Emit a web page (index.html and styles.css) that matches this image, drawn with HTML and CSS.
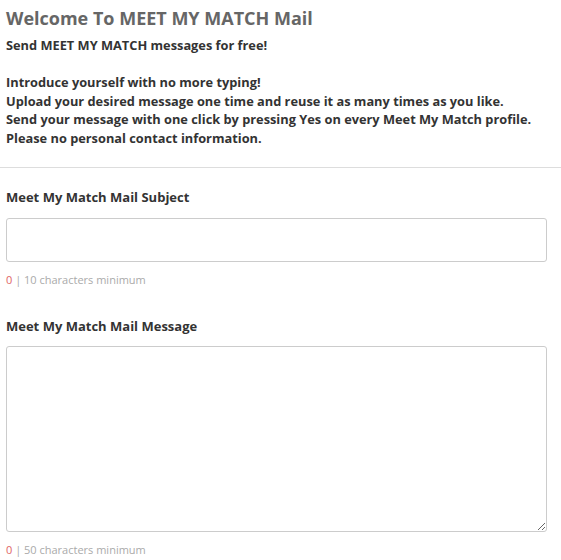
FILE: index.html
```html
<!DOCTYPE html>
<html lang="en">
<head>
    <meta charset="UTF-8">
    <meta name="viewport" content="width=device-width, initial-scale=1.0">
    <title>Meet My Match Mail</title>
    <link rel="stylesheet" href="styles.css">
</head>
<body>

<div class="intro">
    <h1>Welcome To MEET MY MATCH Mail</h1>
    <p>Send MEET MY MATCH messages for free!</p>
    <p>Introduce yourself with no more typing!<br>
    Upload your desired message one time and reuse it as many times as you like.<br>
    Send your message with one click by pressing Yes on every Meet My Match profile.<br>
    Please no personal contact information.</p>
</div>

<hr class="divider">

<form class="mail-form">
    <div class="field">
        <label for="subject">Meet My Match Mail Subject</label>
        <input type="text" id="subject">
        <div class="counter"><span class="count">0</span> | 10 characters minimum</div>
    </div>

    <div class="field">
        <label for="message">Meet My Match Mail Message</label>
        <textarea id="message"></textarea>
        <div class="counter"><span class="count">0</span> | 50 characters minimum</div>
    </div>
</form>

</body>
</html>
```

FILE: styles.css
```css
body {
    margin: 0;
    font-family: "Open Sans", Arial, sans-serif;
    color: #333;
    background-color: #fff;
}
.intro {
    padding: 7px 14px 0 6px;
}
.intro h1 {
    margin: 0 0 7px 0;
    font-size: 18px;
    line-height: 22px;
    font-weight: bold;
    color: #666;
}
.intro p {
    margin: 0 0 18.5px 0;
    font-size: 12.8px;
    line-height: 18.5px;
    font-weight: bold;
}
.intro p:last-child {
    margin-bottom: 0;
}
.divider {
    border: none;
    border-top: 1px solid #ddd;
    margin: 20px 0 0 0;
}
.mail-form {
    padding: 20px 14px 0 6px;
}
.field {
    margin-bottom: 29px;
}
.field label {
    display: block;
    font-size: 13px;
    line-height: 18.5px;
    font-weight: bold;
    margin-bottom: 11px;
}
.field input,
.field textarea {
    display: block;
    box-sizing: border-box;
    width: 100%;
    border: 1px solid #ccc;
    border-radius: 3px;
    font-family: inherit;
    font-size: 13px;
    padding: 6px 10px;
    margin: 0;
}
.field input {
    height: 44px;
}
.field textarea {
    height: 186px;
}
.counter {
    margin-top: 10px;
    font-size: 11px;
    line-height: 16px;
    color: #aaa;
}
.count {
    color: #e06666;
}
```
